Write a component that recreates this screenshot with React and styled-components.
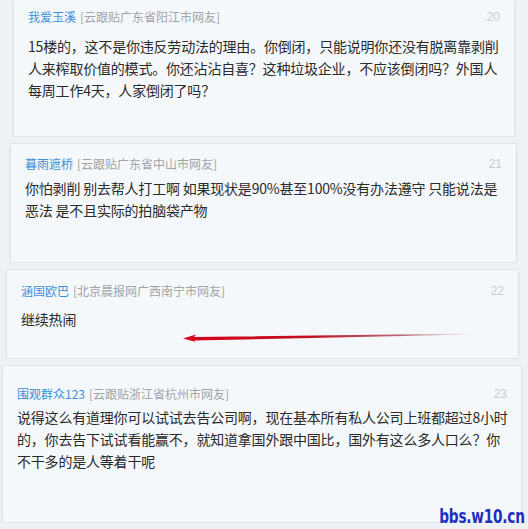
import React from 'react';
import styled, { createGlobalStyle } from 'styled-components';

const GlobalStyle = createGlobalStyle`
  html, body {
    margin: 0;
    padding: 0;
    background: #eef2f5;
  }
`;

function App() {
  let posts = [
    {
      name: '我爱玉溪', from: '[云跟贴广东省阳江市网友]', floor: 20,
      lines: [
        '15楼的，这不是你违反劳动法的理由。你倒闭，只能说明你还没有脱离靠剥削',
        '人来榨取价值的模式。你还沾沾自喜？这种垃圾企业，不应该倒闭吗？外国人',
        '每周工作4天，人家倒闭了吗？',
      ],
      left: 13, right: 13, pad: 8, gap: 10, height: 137, topBorder: false,
    },
    {
      name: '暮雨遮桥', from: '[云跟贴广东省中山市网友]', floor: 21,
      lines: [
        '你怕剥削 别去帮人打工啊 如果现状是90%甚至100%没有办法遵守 只能说法是',
        '恶法 是不且实际的拍脑袋产物',
      ],
      left: 10, right: 11, pad: 12, gap: 5, height: 120, topBorder: true,
    },
    {
      name: '涵国欧巴', from: '[北京晨报网广西南宁市网友]', floor: 22,
      lines: ['继续热闹'],
      left: 6, right: 9, pad: 13, gap: 9, height: 90, topBorder: true, arrow: true,
    },
    {
      name: '围观群众123', from: '[云跟贴浙江省杭州市网友]', floor: 23,
      lines: [
        '说得这么有道理你可以试试去告公司啊，现在基本所有私人公司上班都超过8小时',
        '的，你去告下试试看能赢不，就知道拿国外跟中国比，国外有这么多人口么？你',
        '不干多的是人等着干呢',
      ],
      left: 2, right: 6, pad: 20, gap: 4, height: 158, topBorder: true,
    },
  ];
  return (
    <Page>
      <GlobalStyle />
      <Column>
        {posts.map((p, i) => (
          <Card key={i} $left={p.left} $right={p.right} $pad={p.pad} $h={p.height} $top={p.topBorder}>
            <Header>
              <Who>
                <Name>{p.name}</Name>
                <From>{p.from}</From>
              </Who>
              <Floor>{p.floor}</Floor>
            </Header>
            <Body $gap={p.gap}>
              {p.lines.map((l, j) => (
                <Line key={j}>{l}</Line>
              ))}
            </Body>
            {p.arrow && <Arrow />}
          </Card>
        ))}
      </Column>
      <Watermark>bbs.w10.cn</Watermark>
    </Page>
  );
}

const Arrow = () => (
  <ArrowSvg width="300" height="14" viewBox="0 0 300 14">
    <defs>
      <linearGradient id="fade" x1="0" x2="1" y1="0" y2="0">
        <stop offset="0" stopColor="#d8001c" />
        <stop offset="0.45" stopColor="#c0101f" />
        <stop offset="0.75" stopColor="#a03040" stopOpacity="0.7" />
        <stop offset="1" stopColor="#c0a0a8" stopOpacity="0.1" />
      </linearGradient>
    </defs>
    <polygon points="0,8.5 13,4.5 11,7 290,3.6 290,4.4 11,10.5 13,12" fill="url(#fade)" />
  </ArrowSvg>
);

const Page = styled.div`
  position: relative;
  width: 528px;
  height: 529px;
  overflow: hidden;
  background: #eef2f5;
  font-family: "Noto Sans CJK SC", "Liberation Sans", sans-serif;
`;

const Column = styled.div`
  display: flex;
  flex-direction: column;
  gap: 6px;
`;

const Card = styled.div`
  position: relative;
  box-sizing: border-box;
  min-height: ${(p) => p.$h}px;
  margin-left: ${(p) => p.$left}px;
  margin-right: ${(p) => p.$right}px;
  padding: ${(p) => p.$pad}px 14px 0 14px;
  background: #f5f8fb;
  border: 1px solid #dde4ea;
  border-top-color: ${(p) => (p.$top ? '#dde4ea' : 'transparent')};
  box-shadow: -5px 0 0 -4px #e2e8ee, 4px 0 0 -3px #e4eaf0;
`;

const Header = styled.div`
  display: flex;
  justify-content: space-between;
  align-items: center;
  height: 16px;
  font-size: 12px;
  line-height: 16px;
`;

const Who = styled.div`
  display: flex;
  gap: 4px;
`;

const Name = styled.span`
  color: #3d8fd8;
`;

const From = styled.span`
  color: #a0a4a8;
`;

const Floor = styled.span`
  color: #c8ccd0;
  font-family: "Liberation Sans", sans-serif;
  font-size: 12px;
`;

const Body = styled.div`
  margin-top: ${(p) => p.$gap}px;
  font-size: 14px;
  line-height: 22px;
  color: #2a2a2a;
`;

const Line = styled.div`
  white-space: nowrap;
  letter-spacing: -0.2px;
`;

const ArrowSvg = styled.svg`
  position: absolute;
  left: 176px;
  top: 60px;
`;

const Watermark = styled.div`
  position: absolute;
  right: 3px;
  bottom: 3px;
  font-family: "DejaVu Sans", sans-serif;
  font-weight: bold;
  font-size: 19px;
  line-height: 20px;
  color: #1f2fc0;
  transform: scaleX(0.72);
  transform-origin: right center;
  letter-spacing: -0.3px;
`;

export default App;
